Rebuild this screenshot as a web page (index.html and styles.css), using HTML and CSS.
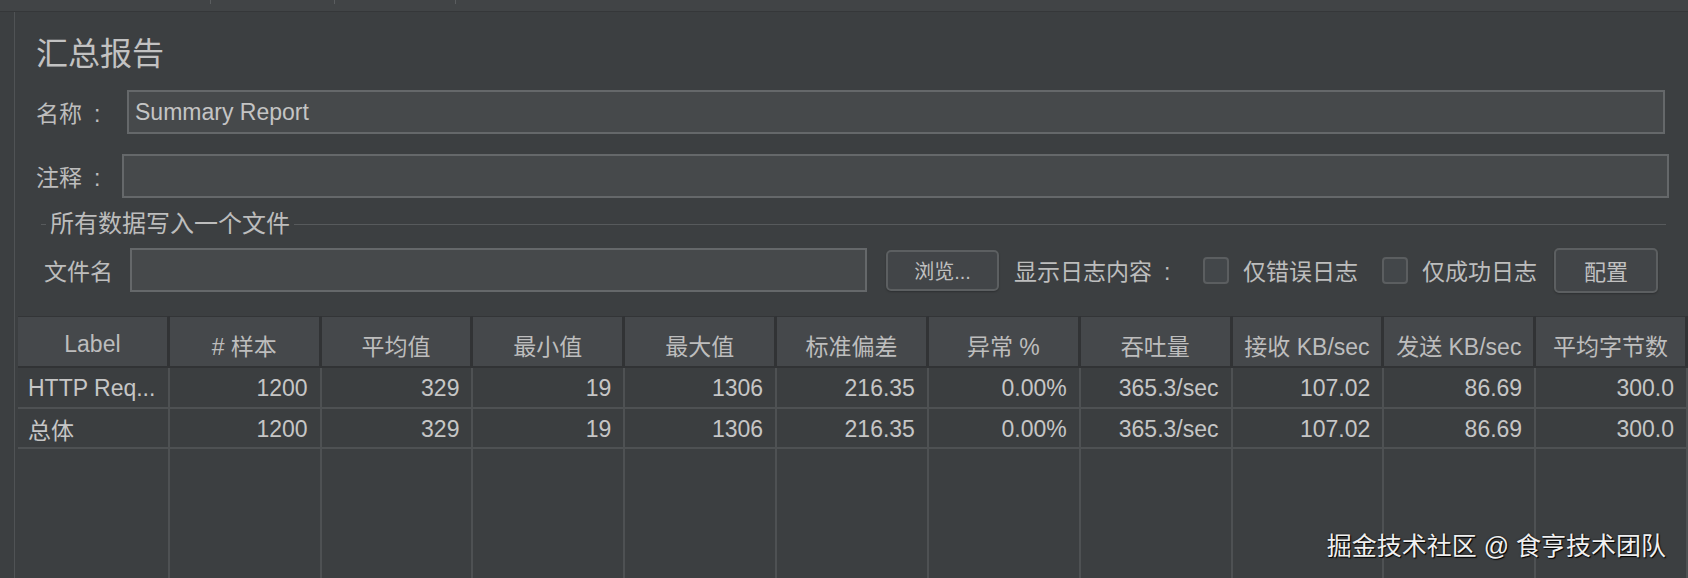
FILE: index.html
```html
<!DOCTYPE html>
<html lang="zh-CN">
<head>
    <meta charset="UTF-8">
    <meta name="viewport" content="width=device-width, initial-scale=1.0">
    <title>汇总报告</title>
    <link rel="stylesheet" href="styles.css">
</head>
<body>
    <!-- strip of the tab bar above the panel -->
    <div class="topbar">
        <span class="tab tab-1"></span>
        <span class="tab tab-2"></span>
        <span class="tab tab-3"></span>
    </div>

    <div class="frame">
        <div class="gutter"></div>
        <div class="panel">
            <h1 class="title">汇总报告</h1>

            <div class="field name-row">
                <label class="field-label">名称<span class="colon">:</span></label>
                <input type="text" class="text-input" value="Summary Report">
            </div>
            <div class="field comment-row">
                <label class="field-label">注释<span class="colon">:</span></label>
                <input type="text" class="text-input">
            </div>

            <!-- Write all data to a file -->
            <div class="group">
                <div class="group-title"><span>所有数据写入一个文件</span></div>
                <div class="file-row">
                    <label class="file-label">文件名</label>
                    <input type="text" class="text-input file-input">
                    <button class="btn browse-btn">浏览...</button>
                    <span class="log-label">显示日志内容<span class="colon">:</span></span>
                    <label class="check"><span class="box"></span>仅错误日志</label>
                    <label class="check check-2"><span class="box"></span>仅成功日志</label>
                    <button class="btn config-btn">配置</button>
                </div>
            </div>

            <!-- Results table -->
            <div class="results">
                <div class="th">Label</div>
                <div class="th"># 样本</div>
                <div class="th">平均值</div>
                <div class="th">最小值</div>
                <div class="th">最大值</div>
                <div class="th">标准偏差</div>
                <div class="th">异常 %</div>
                <div class="th">吞吐量</div>
                <div class="th">接收 KB/sec</div>
                <div class="th">发送 KB/sec</div>
                <div class="th">平均字节数</div>

                <div class="td first-row label-cell">HTTP Req...</div>
                <div class="td first-row">1200</div>
                <div class="td first-row">329</div>
                <div class="td first-row">19</div>
                <div class="td first-row">1306</div>
                <div class="td first-row">216.35</div>
                <div class="td first-row">0.00%</div>
                <div class="td first-row">365.3/sec</div>
                <div class="td first-row">107.02</div>
                <div class="td first-row">86.69</div>
                <div class="td first-row">300.0</div>

                <div class="td label-cell">总体</div>
                <div class="td">1200</div>
                <div class="td">329</div>
                <div class="td">19</div>
                <div class="td">1306</div>
                <div class="td">216.35</div>
                <div class="td">0.00%</div>
                <div class="td">365.3/sec</div>
                <div class="td">107.02</div>
                <div class="td">86.69</div>
                <div class="td">300.0</div>

                <div class="filler"></div>
                <div class="filler"></div>
                <div class="filler"></div>
                <div class="filler"></div>
                <div class="filler"></div>
                <div class="filler"></div>
                <div class="filler"></div>
                <div class="filler"></div>
                <div class="filler"></div>
                <div class="filler"></div>
                <div class="filler"></div>
            </div>
        </div>
    </div>

    <div class="watermark">掘金技术社区 @ 食亨技术团队</div>
</body>
</html>
```

FILE: styles.css
```css
/* Dark theme summary report panel */
body {
    margin: 0;
    height: 578px;
    overflow: hidden;
    position: relative;
    background-color: #3c3f41;
    color: #bdbdbd;
    font-family: "Liberation Sans", "Noto Sans CJK SC", sans-serif;
}
.topbar {
    display: flex;
    height: 11px;
    background-color: #414446;
    border-bottom: 1px solid #353739;
}
.tab {
    height: 4px;
    border-right: 1px solid #5a5d5f;
}
.tab-1 { width: 210px; }
.tab-2 { width: 123px; }
.tab-3 { width: 120px; }

.frame {
    display: flex;
    height: 566px;
}
.gutter {
    width: 14px;
    flex-shrink: 0;
    border-right: 1px solid #505355;
}
.panel {
    flex: 1;
    min-width: 0;
}
.title {
    margin: 23px 0 0 21px;
    font-size: 32px;
    line-height: 38px;
    font-weight: normal;
    color: #c2c2c2;
}

/* Name / comment rows */
.field {
    display: flex;
    align-items: center;
    height: 44px;
    padding-left: 21px;
}
.name-row {
    margin-top: 17px;
    padding-right: 23px;
}
.comment-row {
    margin-top: 20px;
    padding-right: 19px;
}
.field-label {
    flex-shrink: 0;
    font-size: 23px;
}
/* the colon sits apart from the label text */
.colon {
    margin-left: 12px;
}
.name-row .field-label { width: 91px; }
.comment-row .field-label { width: 86px; }
.text-input {
    flex: 1;
    height: 44px;
    box-sizing: border-box;
    padding: 0 6px;
    background-color: #46494b;
    border: 2px solid #65686a;
    color: #c4c4c4;
    font-family: inherit;
    font-size: 23px;
    outline: none;
}

/* Group box with title line */
.group {
    margin: 14px 22px 0 26px;
}
.group-title {
    display: flex;
    align-items: center;
    height: 24px;
    font-size: 24px;
}
.group-title::before,
.group-title::after {
    content: "";
    height: 1px;
    background-color: #575a5c;
}
.group-title::before { width: 5px; }
.group-title::after { flex: 1; }
.group-title span {
    padding: 0 4px;
    line-height: 24px;
}
.file-row {
    display: flex;
    align-items: center;
    height: 44px;
    margin-top: 12px;
    padding-left: 3px;
    font-size: 23px;
}
.file-label {
    width: 86px;
    flex-shrink: 0;
}
.file-input {
    flex: none;
    width: 737px;
}
.btn {
    box-sizing: border-box;
    background-color: #424548;
    border: 2px solid #5c5f61;
    border-radius: 5px;
    color: #c0c0c0;
    font-family: inherit;
    box-shadow: 0 1px 2px rgba(0, 0, 0, 0.25);
}
.browse-btn {
    width: 113px;
    height: 41px;
    margin-left: 19px;
    font-size: 20px;
}
.log-label {
    width: 189px;
    margin-left: 15px;
}
.check {
    display: flex;
    align-items: center;
}
.check-2 {
    margin-left: 24px;
}
.box {
    width: 26px;
    height: 27px;
    box-sizing: border-box;
    margin-right: 14px;
    background-color: #43474a;
    border: 2px solid #5b5e60;
    border-radius: 4px;
}
.config-btn {
    width: 104px;
    height: 45px;
    margin-left: 17px;
    font-size: 22px;
}

/* Results grid */
.results {
    display: grid;
    grid-template-columns: repeat(11, 1fr);
    width: 1670px;
    margin: 24px 0 0 3px;
    font-size: 23px;
}
.th {
    height: 52px;
    box-sizing: border-box;
    display: flex;
    align-items: center;
    justify-content: center;
    padding-top: 6px;
    background-color: #45484b;
    border-top: 1px solid #333537;
    border-right: 3px solid #313335;
    border-bottom: 2px solid #313335;
    white-space: nowrap;
}
.td {
    height: 40px;
    box-sizing: border-box;
    display: flex;
    align-items: center;
    justify-content: flex-end;
    padding-top: 2px;
    padding-right: 12px;
    background-color: #3b3e40;
    border-right: 2px solid #4e5153;
    border-bottom: 2px solid #4e5153;
    color: #c6c6c6;
    font-size: 23px;
    white-space: nowrap;
}
.first-row {
    height: 41px;
}
.label-cell {
    justify-content: flex-start;
    padding-left: 10px;
}
.filler {
    height: 129px;
    border-right: 2px solid #4e5153;
}

.watermark {
    position: absolute;
    right: 22px;
    bottom: 16px;
    font-size: 25px;
    color: #f0f0f0;
    text-shadow: 1px 1px 1px #000, 0 0 2px rgba(0, 0, 0, 0.6);
}
```
